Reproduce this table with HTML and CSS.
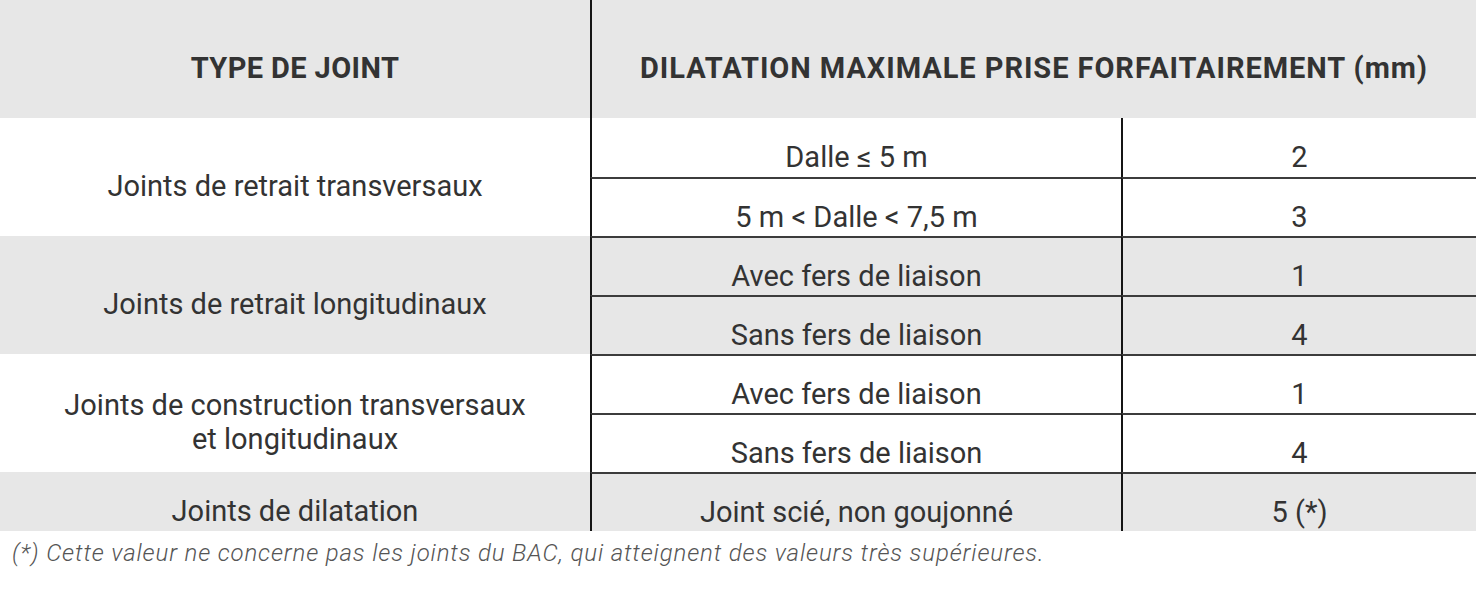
FILE: index.html
```html
<!DOCTYPE html>
<html lang="fr">
<head>
<meta charset="utf-8">
<title>Dilatation des joints</title>
<link rel="stylesheet" href="styles.css">
</head>
<body>
<div class="table">
  <div class="cell head">TYPE DE JOINT</div>
  <div class="cell head wide sep">DILATATION MAXIMALE PRISE FORFAITAIREMENT (mm)</div>

  <div class="cell type g1">Joints de retrait transversaux</div>
  <div class="cell sep">Dalle ≤ 5 m</div>
  <div class="cell sep">2</div>
  <div class="cell sep line">5 m &lt; Dalle &lt; 7,5 m</div>
  <div class="cell sep line">3</div>

  <div class="cell type g2 grey">Joints de retrait longitudinaux</div>
  <div class="cell sep line grey">Avec fers de liaison</div>
  <div class="cell sep line grey">1</div>
  <div class="cell sep line grey">Sans fers de liaison</div>
  <div class="cell sep line grey">4</div>

  <div class="cell type g3">Joints de construction transversaux<br>et longitudinaux</div>
  <div class="cell sep line">Avec fers de liaison</div>
  <div class="cell sep line">1</div>
  <div class="cell sep line">Sans fers de liaison</div>
  <div class="cell sep line">4</div>

  <div class="cell type g4 grey">Joints de dilatation</div>
  <div class="cell sep line grey">Joint scié, non goujonné</div>
  <div class="cell sep line grey">5 (*)</div>
</div>
<p class="note">(*) Cette valeur ne concerne pas les joints du BAC, qui atteignent des valeurs très supérieures.</p>
</body>
</html>
```
FILE: styles.css
```css
html, body {
  margin: 0;
  padding: 0;
  background: #ffffff;
}

body {
  font-family: Roboto, "Liberation Sans", sans-serif;
  color: #333333;
  width: 1476px;
}

.table {
  display: grid;
  grid-template-columns: 590px 531px 355px;
  grid-template-rows: 118px repeat(7, 59px);
}

.cell {
  box-sizing: border-box;
  display: flex;
  align-items: center;
  justify-content: center;
  text-align: center;
  padding-top: 18px;
  font-size: 29px;
  line-height: 34px;
  background: #ffffff;
}

.head {
  background: #e7e7e7;
  font-weight: 700;
  font-size: 29px;
  letter-spacing: 0.4px;
}

.wide {
  grid-column: 2 / 4;
  letter-spacing: 0.95px;
}

.sep {
  border-left: 2px solid #151515;
}

.line {
  border-top: 2px solid #3c3c3c;
}

.grey {
  background: #e7e7e7;
}

.type {
  grid-column: 1;
}

.g1 { grid-row: 2 / 4; }
.g2 { grid-row: 4 / 6; }
.g3 { grid-row: 6 / 8; }
.g4 { grid-row: 8 / 9; }

.note {
  margin: 9px 0 0 12px;
  font-size: 24px;
  line-height: 27px;
  font-style: italic;
  font-weight: 300;
  letter-spacing: 0.86px;
  color: #555555;
}
```
